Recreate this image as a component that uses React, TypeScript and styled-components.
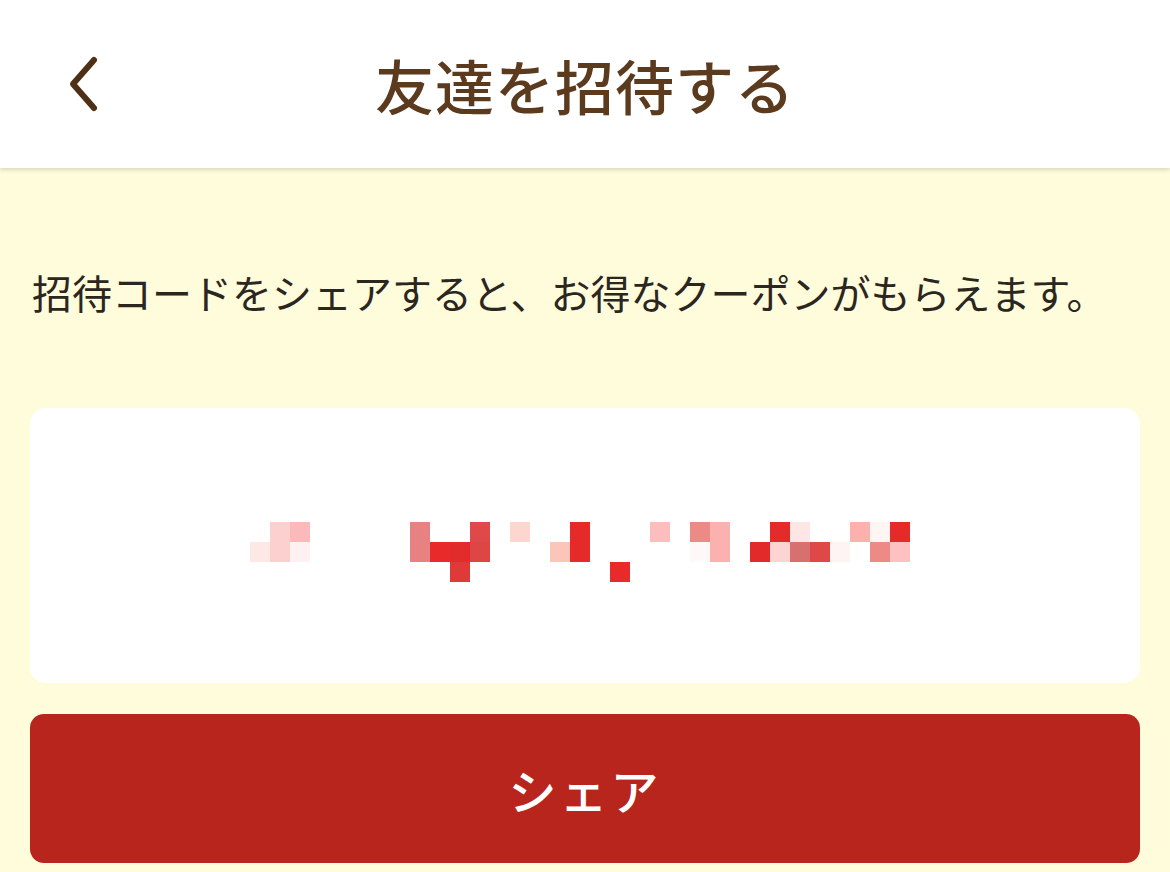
import React from "react";
import styled, { createGlobalStyle } from "styled-components";

const GlobalStyle = createGlobalStyle`
	html, body {
		margin: 0;
		padding: 0;
		background: #fffcdc;
	}
	body {
		font-family: "Noto Sans CJK JP", "Noto Sans", sans-serif;
	}
`;

const Page = styled.div`
	width: 1170px;
	min-height: 872px;
	background: #fffcdc;
	overflow: hidden;
`;

const Header = styled.header`
	position: relative;
	height: 168px;
	background: #ffffff;
	display: flex;
	align-items: center;
	justify-content: center;
	box-shadow: 0 2px 4px rgba(0, 0, 0, 0.14);
`;

const BackButton = styled.button`
	position: absolute;
	left: 56px;
	top: 50%;
	transform: translateY(-50%);
	width: 56px;
	height: 72px;
	padding: 0;
	border: none;
	background: transparent;
	display: flex;
	align-items: center;
	justify-content: center;
	cursor: pointer;
`;

const Title = styled.h1`
	margin: 0;
	font-size: 59px;
	font-weight: 500;
	color: #5b3a1e;
	letter-spacing: 1px;
`;

const Content = styled.main`
	padding: 100px 30px 0;
	display: flex;
	flex-direction: column;
`;

const Lead = styled.p`
	margin: 0 0 0 2px;
	font-size: 40px;
	line-height: 48px;
	color: #2b2620;
`;

const CodeCard = styled.div`
	margin-top: 92px;
	height: 275px;
	background: #ffffff;
	border-radius: 16px;
	display: flex;
	align-items: center;
	justify-content: center;
`;

const Mosaic = styled.svg`
	margin: 13px 0 0 -10px;
`;

const ShareButton = styled.button`
	margin-top: 31px;
	height: 149px;
	border: none;
	border-radius: 14px;
	background: #b8251d;
	color: #ffffff;
	font-family: inherit;
	font-size: 48px;
	font-weight: 500;
	letter-spacing: 3px;
	cursor: pointer;
`;

// pixelated invite code: [column, row, colour]
const cells: [number, number, string][] = [
	[1, 0, "#fdd0d0"], [2, 0, "#fbb9b9"], [8, 0, "#e88181"], [11, 0, "#e04949"],
	[13, 0, "#fdd6d0"], [16, 0, "#e62a2a"], [20, 0, "#fcbdbd"], [22, 0, "#ec8a86"],
	[23, 0, "#fcb1b1"], [26, 0, "#e32b2b"], [27, 0, "#fde6e4"], [30, 0, "#fcb1ad"],
	[31, 0, "#fff6f4"], [32, 0, "#e52a2a"],
	[0, 1, "#fde8e6"], [1, 1, "#fdd0d0"], [2, 1, "#fff1f1"], [8, 1, "#e88181"],
	[9, 1, "#e82a2a"], [10, 1, "#e22b2b"], [11, 1, "#de4545"], [15, 1, "#fcc5b9"],
	[16, 1, "#e52a2a"], [22, 1, "#fff8f8"], [23, 1, "#fcb1b1"], [25, 1, "#e12b2b"],
	[26, 1, "#fdd4d4"], [27, 1, "#d87070"], [28, 1, "#e04848"], [29, 1, "#fff4f4"],
	[31, 1, "#ec8a86"], [32, 1, "#fdc1c1"],
	[10, 2, "#de3a3a"], [18, 2, "#e82a2a"],
];

const CodeMosaic = () => (
	<Mosaic width={660} height={60} viewBox="0 0 660 60">
		{cells.map(([c, r, fill], i) => (
			<rect key={i} x={c * 20} y={r * 20} width={20} height={20} fill={fill} />
		))}
	</Mosaic>
);

export default function App() {
	return (
		<Page>
			<GlobalStyle />
			<Header>
				<BackButton aria-label="戻る">
					<svg width="40" height="60" viewBox="0 0 40 60">
						<path
							d="M30 6 L9 30 L30 54"
							fill="none"
							stroke="#4e3016"
							strokeWidth="6"
							strokeLinecap="round"
							strokeLinejoin="round"
						/>
					</svg>
				</BackButton>
				<Title>友達を招待する</Title>
			</Header>
			<Content>
				<Lead>招待コードをシェアすると、お得なクーポンがもらえます。</Lead>
				<CodeCard>
					<CodeMosaic />
				</CodeCard>
				<ShareButton>シェア</ShareButton>
			</Content>
		</Page>
	);
}
